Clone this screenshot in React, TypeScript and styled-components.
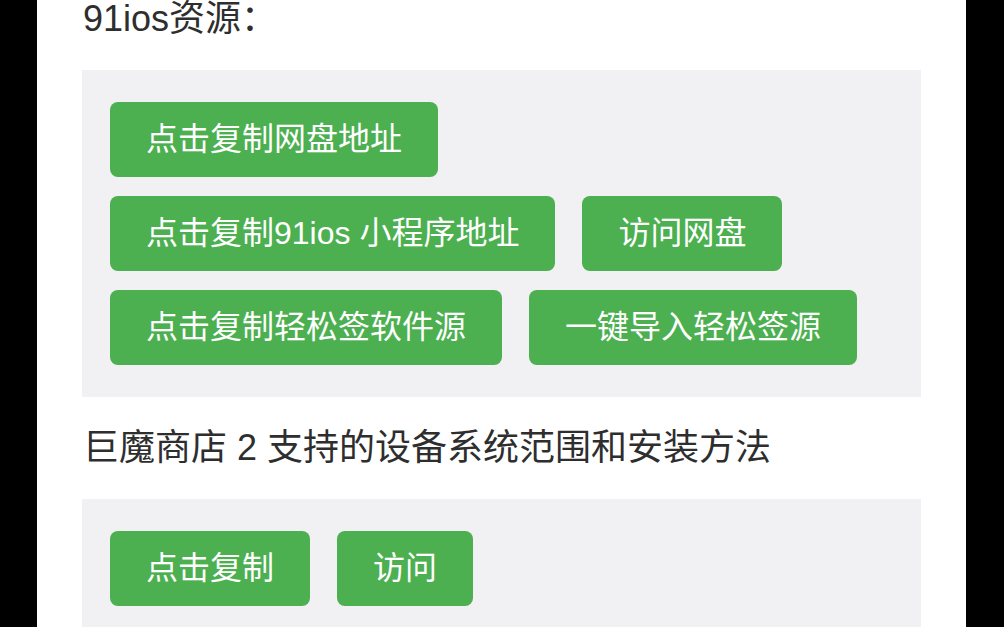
import React from 'react';
import styled, { createGlobalStyle } from 'styled-components';

const GlobalStyle = createGlobalStyle`
  html, body {
    margin: 0;
    padding: 0;
    background: #000;
    height: 100%;
    overflow: hidden;
  }
  #root {
    height: 100%;
  }
`;

const Screen = styled.div`
  height: 627px;
  display: flex;
  background: #000;
  padding-left: 37px;
`;

const Page = styled.div`
  width: 929px;
  height: 100%;
  background: #fff;
  padding: 0 45px;
  box-sizing: border-box;
  font-family: "Liberation Sans", "Noto Sans CJK SC", sans-serif;
  overflow: hidden;
`;

const Heading = styled.h2<{ first?: boolean }>`
  margin: ${({ first }) => (first ? '-6px' : '26px')} 0 26px;
  font-size: 36px;
  line-height: 50px;
  font-weight: 400;
  color: #2e2e2e;
  padding-left: 1px;
`;

const Panel = styled.div`
  background: #f1f1f3;
  padding: 32px 28px;
  display: flex;
  flex-direction: column;
  gap: 19px;
`;

const Row = styled.div`
  display: flex;
  gap: 27px;
`;

const GreenButton = styled.button`
  height: 75px;
  padding: 0 36px;
  border: none;
  border-radius: 8px;
  background: #4caf50;
  color: #fff;
  font-family: inherit;
  font-size: 32px;
  line-height: 75px;
  white-space: nowrap;
  cursor: pointer;
`;

const App: React.FC = () => {
  return (
    <>
      <GlobalStyle />
      <Screen>
        <Page>
          <Heading first>91ios资源：</Heading>
          <Panel>
            <Row>
              <GreenButton>点击复制网盘地址</GreenButton>
            </Row>
            <Row>
              <GreenButton>点击复制91ios 小程序地址</GreenButton>
              <GreenButton>访问网盘</GreenButton>
            </Row>
            <Row>
              <GreenButton>点击复制轻松签软件源</GreenButton>
              <GreenButton>一键导入轻松签源</GreenButton>
            </Row>
          </Panel>
          <Heading>巨魔商店 2 支持的设备系统范围和安装方法</Heading>
          <Panel>
            <Row>
              <GreenButton>点击复制</GreenButton>
              <GreenButton>访问</GreenButton>
            </Row>
          </Panel>
        </Page>
      </Screen>
    </>
  );
};

export default App;
